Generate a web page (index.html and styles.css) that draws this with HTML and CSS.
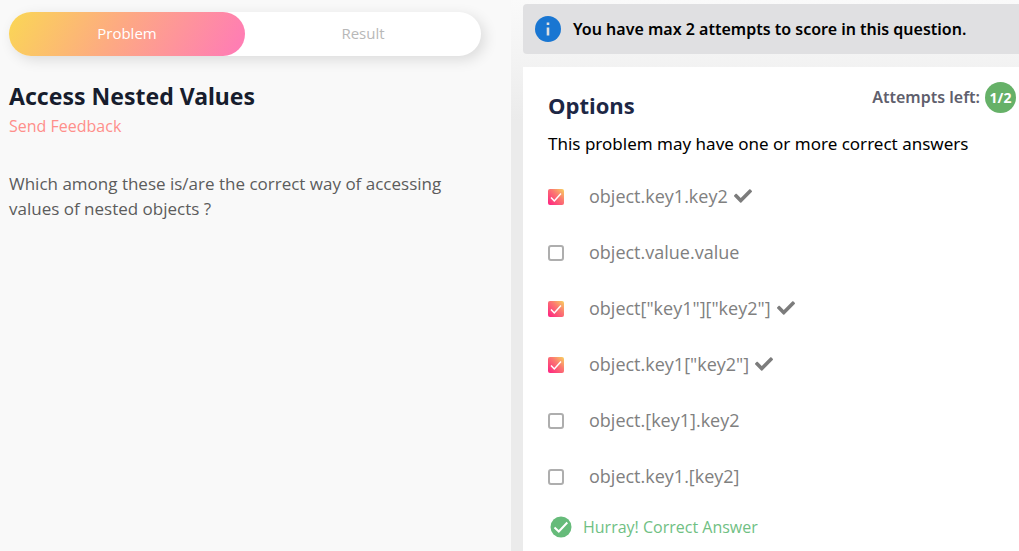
FILE: index.html
```html
<!DOCTYPE html>
<html lang="en">
<head>
<meta charset="utf-8">
<meta name="viewport" content="width=device-width, initial-scale=1">
<title>Access Nested Values</title>
<link rel="stylesheet" href="styles.css">
</head>
<body>
<svg class="sprite" aria-hidden="true">
  <symbol id="tick" viewBox="0 0 512 512"><path d="M173.9 439.4 7.5 273c-10-10-10-26.200 0-36.200l36.200-36.200c10-10 26.200-10 36.200 0L192 312.700 432.100 72.600c10-10 26.200-10 36.200 0l36.200 36.200c10 10 10 26.200 0 36.200L210.100 439.400c-10 10-26.200 10-36.200 0z"/></symbol>
</svg>
<div class="page">
  <main class="problem">
    <div class="tabs" role="tablist">
      <button class="tab tab-active" role="tab" aria-selected="true">Problem</button>
      <button class="tab" role="tab" aria-selected="false">Result</button>
    </div>
    <h1 class="title">Access Nested Values</h1>
    <a class="feedback" href="#">Send Feedback</a>
    <p class="question">Which among these is/are the correct way of accessing values of nested objects ?</p>
  </main>
  <section class="answer">
    <div class="notice">
      <svg class="notice-icon" viewBox="0 0 24 24" aria-hidden="true"><circle cx="12" cy="12" r="12" fill="#1976d2"/><path d="M10.800 6h2.400v2.400h-2.400zM10.800 10.500h2.400v7.500h-2.400z" fill="#e0e0e2"/></svg>
      <span>You have max 2 attempts to score in this question.</span>
    </div>
    <form class="card">
      <div class="card-head">
        <h2 class="card-title">Options</h2>
        <div class="attempts">Attempts left: <span class="count">1/2</span></div>
      </div>
      <p class="hint">This problem may have one or more correct answers</p>
      <div class="options">
        <label class="option"><input class="box" type="checkbox" checked><span>object.key1.key2</span><svg class="tick"><use href="#tick"/></svg></label>
        <label class="option"><input class="box" type="checkbox"><span>object.value.value</span></label>
        <label class="option"><input class="box" type="checkbox" checked><span>object["key1"]["key2"]</span><svg class="tick"><use href="#tick"/></svg></label>
        <label class="option"><input class="box" type="checkbox" checked><span>object.key1["key2"]</span><svg class="tick"><use href="#tick"/></svg></label>
        <label class="option"><input class="box" type="checkbox"><span>object.[key1].key2</span></label>
        <label class="option"><input class="box" type="checkbox"><span>object.key1.[key2]</span></label>
      </div>
      <div class="result">
        <svg class="result-icon" viewBox="0 0 22 22" aria-hidden="true"><circle cx="11" cy="11" r="10.500" fill="#66bb7a"/><path d="M4.500 11.500 8.800 15.500 17.300 6.500" fill="none" stroke="#fff" stroke-width="2"/></svg>
        <span>Hurray! Correct Answer</span>
      </div>
    </form>
  </section>
</div>
</body>
</html>
```
FILE: styles.css
```css
* { box-sizing: border-box; }
body {
  margin: 0;
  background: #f9f9f9;
  color: #000;
  font-family: "Open Sans", "Noto Sans", sans-serif;
  font-size: 16px;
}
h1, h2, p { margin: 0; }
.sprite { display: none; }
.page {
  display: grid;
  grid-template-columns: 511fr 508fr;
  min-height: 100vh;
}
.problem { padding: 12px 30px 12px 9px; }
.tabs {
  display: flex;
  height: 44px;
  border-radius: 22px;
  background: #fff;
  box-shadow: 4px 4px 14px rgba(0, 0, 0, 0.12);
}
.tab {
  flex: 1;
  border: 0;
  border-radius: 22px;
  padding: 0 0 2px;
  background: none;
  color: #b8b8b8;
  font-family: inherit;
  font-size: 15px;
}
.tab-active {
  background: linear-gradient(120deg, #fad755 0%, #fdaa82 45%, #ff7eb3 95%);
  color: #fff;
}
.title {
  margin-top: 24px;
  color: #171d2d;
  font-family: "Noto Sans", sans-serif;
  font-size: 23px;
  font-weight: 700;
  line-height: 32px;
}
.feedback {
  display: block;
  color: #ff8f8b;
  font-size: 16px;
  font-weight: 500;
  line-height: 28px;
  text-decoration: none;
}
.question {
  margin-top: 31px;
  color: #5c5c5c;
  font-size: 17px;
  line-height: 25px;
}
.answer {
  display: flex;
  flex-direction: column;
  min-width: 0;
  padding: 4px 0 0 12px;
  background: linear-gradient(#fafafa, #f3f3f3 60px, #ebebeb 120px);
}
.notice {
  display: flex;
  align-items: center;
  gap: 12px;
  height: 50px;
  padding-left: 12px;
  border-radius: 4px 0 0 4px;
  background: #e0e0e2;
  font-family: "Noto Sans", sans-serif;
  font-size: 16px;
  font-weight: 600;
  white-space: nowrap;
}
.notice-icon { width: 26px; height: 26px; flex: none; }
.card {
  flex: 1;
  margin-top: 13px;
  padding: 14px 0 0 25px;
  background: #fff;
}
.card-head {
  display: flex;
  justify-content: space-between;
  padding-right: 3px;
}
.card-title {
  padding-top: 8px;
  color: #1d2745;
  font-size: 22px;
  font-weight: 700;
  line-height: 32px;
}
.attempts {
  display: flex;
  align-items: center;
  gap: 5px;
  height: 32px;
  color: #5f5f6d;
  font-family: "Noto Sans", sans-serif;
  font-size: 16px;
  font-weight: 600;
}
.count {
  display: grid;
  place-items: center;
  width: 31px;
  height: 31px;
  border-radius: 50%;
  background: #66b168;
  color: #fff;
  font-size: 14px;
  font-weight: 700;
}
.hint {
  margin-top: 10px;
  font-family: "Noto Sans", sans-serif;
  font-size: 17px;
  line-height: 26px;
}
.options { padding-top: 12px; }
.option {
  display: flex;
  align-items: center;
  height: 56px;
  color: #808080;
  font-size: 18px;
}
.option span { padding-bottom: 2px; }
.box {
  flex: none;
  appearance: none;
  width: 16px;
  height: 16px;
  margin: 0 25px 0 0;
  border: 2px solid #aeaeae;
  border-radius: 3px;
  background: #fff;
}
.box:checked {
  border: 0;
  border-radius: 2px;
  background:
    url("data:image/svg+xml,%3Csvg xmlns='http://www.w3.org/2000/svg' viewBox='0 0 16 16'%3E%3Cpath d='M3 8.500 6.300 12 13 4.500' fill='none' stroke='white' stroke-width='1.500'/%3E%3C/svg%3E"),
    linear-gradient(45deg, #ff1f82, #fb7a70 60%, #f8d35f);
}
.tick {
  width: 18px;
  height: 18px;
  margin: 0 0 2px 6px;
  fill: #7c7c7c;
}
.result {
  display: flex;
  align-items: center;
  gap: 11px;
  padding-left: 2px;
  color: #70c083;
  font-size: 16px;
  line-height: 44px;
}
.result-icon { width: 22px; height: 22px; }
```
